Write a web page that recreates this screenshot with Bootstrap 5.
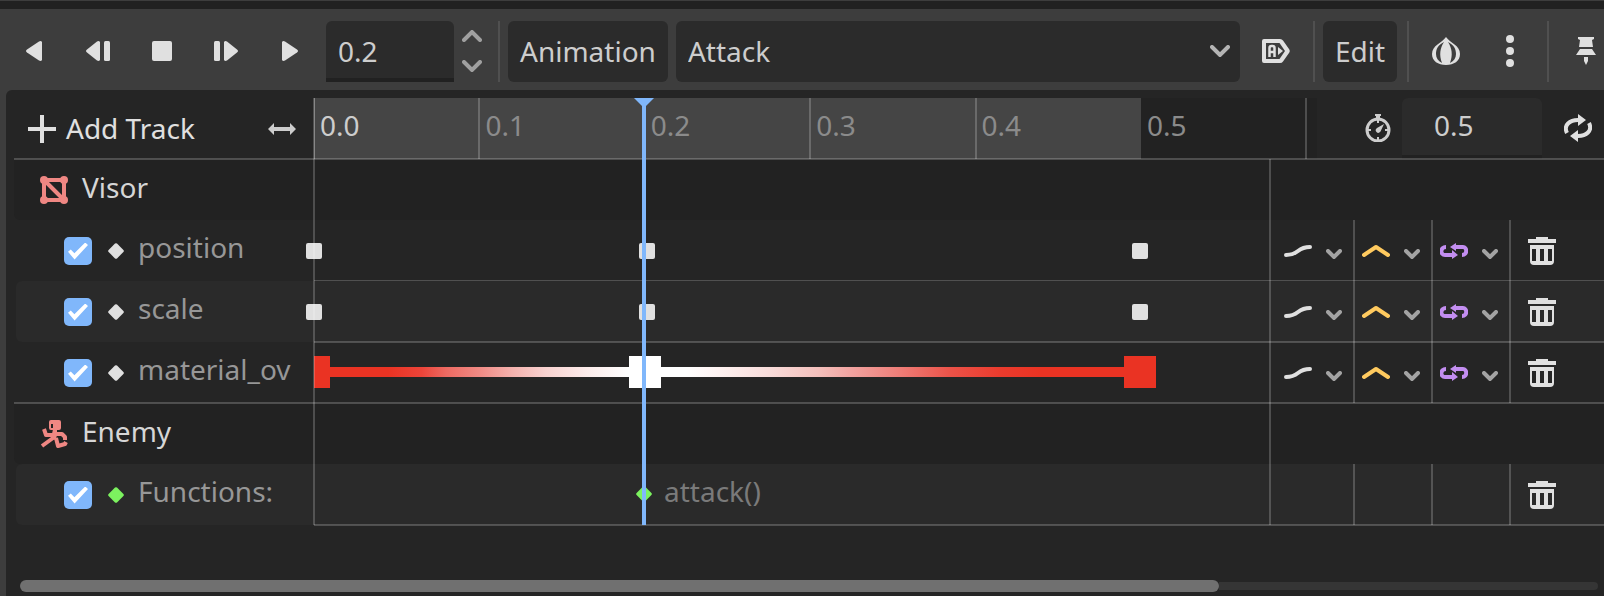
<!DOCTYPE html>
<html lang="en" data-bs-theme="dark">
<head>
<meta charset="utf-8">
<meta name="viewport" content="width=device-width, initial-scale=1">
<title>Animation</title>
<link href="https://cdn.jsdelivr.net/npm/bootstrap@5.3.0/dist/css/bootstrap.min.css" rel="stylesheet">
<style>
:root { --line: rgba(255,255,255,.2); --ink: #e0e0e0; --second: 1654px; --now: .1993; }
body { font: 28px/38px "Noto Sans", sans-serif; color: #cdcdcd; background: #3d3d3d; overflow: hidden; }
svg { display: block; fill: currentColor; flex: none; }
button { color: var(--ink); background: none; border: 0; padding: 0; }
.topstrip { height: 9px; background: #212121; border-top: 1px solid #3d3d3d; }
.toolbar { height: 81px; padding: 12px 0 8px 2px; }
.tool { width: 64px; height: 61px; padding-bottom: 2px; display: flex; align-items: center; justify-content: center; flex: none; }
.tool.auto { width: 56px; margin-right: 9px; }
.tool.pin { margin-right: -14px; }
.field { background: #2b2b2b; color: #cdcdcd; border: 0; border-bottom: 4px solid #212121; height: 61px; border-radius: 6px 6px 0 0; min-width: 0; outline: 0; padding: 2px 12px 0; }
.time-field { width: 128px; }
.spin { width: 36px; height: 61px; color: #a0a0a0; }
.spin button { color: inherit; height: 30px; width: 100%; display: grid; place-items: center; }
.rule-v { width: 2px; background: #505050; flex: none; }
.gap-r { margin-right: 5px; }
.gap-l { margin-left: 5px; }
.after-edit { margin-left: 10px; }
.solid { background: #2b2b2b; color: #cdcdcd; border-radius: 6px; height: 61px; padding: 0 12px 2px; flex: none; }
.pick { position: relative; min-width: 0; margin: 0 8px; }
.pick select { appearance: none; width: 100%; border: 0; height: 61px; background: #2b2b2b; color: #cdcdcd; border-radius: 6px; padding: 0 12px 2px; outline: 0; }
.pick svg { position: absolute; right: 10px; top: 24px; color: #b4b4b4; pointer-events: none; }
.panel { margin-left: 6px; background: #252525; border-top-left-radius: 6px; padding: 8px 0 0 8px; min-height: 506px; }
.names { width: 300px; flex: none; }
.head { height: 61px; }
.head .names { padding: 0 18px 0 14px; }
.addbtn { gap: 10px; }
.addbtn span { margin-bottom: 2px; }
.ruler { position: relative; flex: 1 1 0; min-width: 0; background: #222; overflow: hidden; }
.used { position: absolute; left: 0; top: 0; bottom: 0; width: calc(.5 * var(--second)); background: #454545; }
.tick { position: absolute; top: 0; bottom: 0; left: calc(var(--t) * var(--second) - 1px); border-left: 2px solid var(--line); padding: 8px 0 0 5px; color: #8b8b8b; }
.tick.now { color: #cdcdcd; }
.tick.plain { border-color: transparent; }
.length { width: 287px; flex: none; padding-left: 48px; }
.length svg { margin-bottom: 2px; }
.length-field { width: 140px; padding: 0 32px 4px; margin: 0 22px 0 11px; }
.tracks { position: relative; }
.band { height: 61px; position: relative; display: flex; }
.band.alt::before { content: ""; position: absolute; inset: 0 0 0 2px; background: #2a2a2a; border-radius: 6px 0 0 6px; }
.band.group { background: #222; border-radius: 0 0 0 6px; }
.band > * { position: relative; }
.band.lined::after { content: ""; position: absolute; left: 300px; right: 0; bottom: -1px; height: 2px; background: var(--line); }
.head-line { position: relative; }
.head-line::after { content: ""; position: absolute; left: 0; right: 0; bottom: -1px; height: 2px; background: var(--line); z-index: 1; }
.group .names { padding-left: 26px; display: flex; align-items: center; gap: 14px; color: #d6d6d6; }
.group .names svg { color: #ef8783; }
.track .names { padding-left: 50px; display: flex; align-items: center; color: #979797; overflow: hidden; }
.track .names label { margin-bottom: 8px; }
.group .names span { margin-bottom: 6px; }
.tickbox { appearance: none; width: 28px; height: 28px; border-radius: 5px; background: #80b7fb; margin: 1px 16px 0 0; display: grid; place-items: center; flex: none; }
.tickbox:checked::before { content: ""; width: 20px; height: 17px; background: #fff; clip-path: polygon(0 55%,14% 41%,32% 63%,86% 0,100% 14%,33% 100%); }
.kind { color: var(--ink); margin: 1px 14px 0 0; }
.kind.fn { color: #7cf25f; }
.lane { flex: 1 1 0; min-width: 0; }
.lane i, .mark-fn { position: absolute; }
.key { width: 16px; height: 16px; border-radius: 2px; background: var(--ink); top: 23px; left: calc(var(--t) * var(--second) - 8px); }
.swatch { width: 32px; height: 32px; top: 14px; left: calc(var(--t) * var(--second) - 16px); }
.swatch.first { width: 16px; left: 0; }
.ramp { top: 25px; height: 10px; left: 0; width: calc(.5 * var(--second)); background: linear-gradient(90deg,#ea3323 0,#ea3323 9%,#ec4439 13%,#ed6a62 16%,#f08a84 20%,#f4b2ae 24%,#f8d2d0 28%,#fceceb 33%,#fff 38%,#fff 45%,#fef2f1 49%,#f8dcda 55%,#f4c0bc 61%,#f1a3a0 65%,#ee7c76 71%,#eb5248 77%,#ea3b2d 83%,#ea3323 88%,#ea3323 100%); }
.mark-fn { left: calc(var(--now) * var(--second) - 8px); top: 22px; color: #7cf25f; }
.call { padding: 8px 0 0 350px; color: #7a7a7a; }
.opt { width: 78px; flex: none; border-left: 2px solid var(--line); display: flex; align-items: center; justify-content: space-between; padding: 0 11px 0 7px; height: 61px; color: #a3a3a3; }
.opt.wide { width: 84px; padding-left: 13px; border-color: transparent; }
.opt.del { width: 95px; padding-left: 17px; color: var(--ink); }
.dn { margin-top: 6px; }
.edge { position: absolute; width: 2px; background: var(--line); bottom: 0; pointer-events: none; }
.edge.start { left: 299px; top: -61px; }
.edge.end { right: 333px; top: 0; }
.playhead { position: absolute; left: calc(300px + var(--now) * var(--second) - 2px); width: 4px; top: -61px; bottom: 0; background: #80b7fb; z-index: 3; }
.playhead::before { content: ""; position: absolute; left: -8px; top: 0; border: 10px solid transparent; border-top-color: #80b7fb; border-bottom: 0; }
.scroller { margin: 55px 6px 0 6px; height: 12px; display: flex; align-items: center; }
.scroller .bar { height: 12px; width: 76%; border-radius: 6px; background: #707070; }
.scroller .rest { height: 8px; flex: 1; background: #353535; border-radius: 0 4px 4px 0; }
.hidden-defs { position: absolute; }
</style>
</head>
<body>
<svg class="hidden-defs" width="0" height="0" aria-hidden="true">
<defs>
<symbol id="trash" viewBox="0 0 28 28"><path d="M8 0h12v2h8v4H0V2h8zM2 8h24v16q0 4-4 4H6q-4 0-4-4zm2 4v12h4V12zm8 0v12h4V12zm8 0v12h4V12z" fill-rule="evenodd"/></symbol>
<symbol id="small-down" viewBox="0 0 16 10"><path d="M2 2l6 6 6-6" fill="none" stroke="currentColor" stroke-width="4" stroke-linecap="round"/></symbol>
<symbol id="curve" viewBox="0 0 28 14"><path d="M2 11C16 11 12 3 26 3" fill="none" stroke="#e0e0e0" stroke-width="4" stroke-linecap="round"/></symbol>
<symbol id="peak" viewBox="0 0 28 14"><path d="M2 11l12-8 12 8" fill="none" stroke="#ffca5f" stroke-width="4" stroke-linecap="round" stroke-linejoin="round"/></symbol>
<symbol id="wrap" viewBox="0 0 28 16"><path d="M6 4C0 4 0 12 5 12h8M22 12c6 0 5-8 1-8h-7" fill="none" stroke="#c38ef1" stroke-width="4"/><path d="M12 7l6 5-6 4zM16 0v8l-6-4z" fill="#c38ef1"/></symbol>
<symbol id="diamond" viewBox="0 0 16 16"><path d="M7 .6q1-.9 2 0L15.4 7q.9 1 0 2L9 15.400q-1 .9-2 0L.6 9q-.9-1 0-2z"/></symbol>
</defs>
</svg>
<div class="topstrip"></div>
<header class="toolbar d-flex">
<button class="tool" aria-label="Play backwards"><svg width="16" height="20" viewBox="0 0 16 20"><path d="M16 1v18q-1 1.500-3 .5L1 11.500q-2-1.500 0-3L13 .5q2-1 3 .5z"/></svg></button>
<button class="tool" aria-label="Play backwards from end"><svg width="24" height="20" viewBox="0 0 24 20"><path d="M14 1v18q-1 1.500-3 .5L1 11.500q-2-1.500 0-3L11 .5q2-1 3 .5z"/><rect x="18" width="6" height="20" rx="1.500"/></svg></button>
<button class="tool" aria-label="Stop"><svg width="20" height="20"><rect width="20" height="20" rx="2"/></svg></button>
<button class="tool" aria-label="Play from start"><svg width="24" height="20" viewBox="0 0 24 20"><path d="M10 1v18q1 1.500 3 .5l10-8q2-1.500 0-3L13 .5q-2-1-3 .5z"/><rect width="6" height="20" rx="1.500"/></svg></button>
<button class="tool" aria-label="Play"><svg width="16" height="20" viewBox="0 0 16 20"><path d="M0 1v18q1 1.500 3 .5l12-8q2-1.500 0-3L3 .5q-2-1-3 .5z"/></svg></button>
<input class="field time-field ms-1" value="0.2" aria-label="Current time">
<div class="spin flex-shrink-0"><button aria-label="Increase"><svg width="20" height="12" viewBox="0 0 20 12"><path d="M2 10l8-8 8 8" fill="none" stroke="currentColor" stroke-width="4" stroke-linecap="round"/></svg></button><button aria-label="Decrease"><svg width="20" height="12" viewBox="0 0 20 12"><path d="M2 2l8 8 8-8" fill="none" stroke="currentColor" stroke-width="4" stroke-linecap="round"/></svg></button></div>
<div class="rule-v ms-2 me-2"></div>
<button class="solid">Animation</button>
<div class="pick flex-grow-1"><select aria-label="Animation name"><option>Attack</option></select><svg width="20" height="12" viewBox="0 0 20 12"><path d="M2 2l8 8 8-8" fill="none" stroke="currentColor" stroke-width="4" stroke-linecap="round"/></svg></div>
<button class="tool auto" aria-label="Autoplay on load"><svg width="28" height="24" viewBox="0 0 28 24"><path fill-rule="evenodd" d="M2 0h16q2 0 3 1.500l6 8.500q1.500 2 0 4l-6 8.500Q20 24 18 24H2q-2 0-2-2V2Q0 0 2 0zm2 4v16h13.500L23 12 17.500 4z"/><path d="M7.500 18V9q0-2 2-2h1q2 0 2 2v9M7.500 13h5" fill="none" stroke="currentColor" stroke-width="2.500"/><path d="M16 8l5 4-5 4z"/></svg></button>
<div class="rule-v me-2"></div>
<button class="solid">Edit</button>
<div class="rule-v after-edit gap-r"></div>
<button class="tool" aria-label="Onion skinning"><svg width="28" height="28" viewBox="0 0 28 28"><path fill-rule="evenodd" d="M14 0C18 6 28 8 28 17 28 24 22 28 14 28S0 24 0 17C0 8 10 6 14 0zM12 5C6 8 4 12 4 17 4 21 6 24 10 26 7 18 8 11 12 5zM16 5C20 11 21 18 18 26 22 24 24 21 24 17 24 12 22 8 16 5z"/></svg></button>
<button class="tool" aria-label="More options"><svg width="8" height="32"><circle cx="4" cy="4" r="4"/><circle cx="4" cy="16" r="4"/><circle cx="4" cy="28" r="4"/></svg></button>
<div class="rule-v gap-l gap-r"></div>
<button class="tool pin" aria-label="Pin"><svg width="20" height="28" viewBox="0 0 20 28"><path d="M2 0h16v2l-2 1 1 7H3l1-7-2-1zM4 12h12l4 6H0zM8 20h4v4l-2 4-2-4z"/></svg></button>
</header>
<main class="panel">
<div class="head head-line d-flex">
<div class="names d-flex align-items-center justify-content-between">
<button class="d-flex align-items-center addbtn"><svg width="28" height="28"><path d="M12 0h4v12h12v4H16v12h-4V16H0v-4h12z"/></svg><span>Add Track</span></button>
<svg width="28" height="12" viewBox="0 0 28 12"><path d="M6 0v4h16V0l6 6-6 6V8H6v4L0 6z"/></svg>
</div>
<div class="ruler"><div class="used"></div>
<span class="tick now" style="--t:0">0.0</span><span class="tick" style="--t:.1">0.1</span><span class="tick plain" style="--t:.2">0.2</span><span class="tick" style="--t:.3">0.3</span><span class="tick" style="--t:.4">0.4</span><span class="tick plain" style="--t:.5">0.5</span><span class="tick" style="--t:.6"></span></div>
<div class="length d-flex align-items-center">
<label for="len" aria-label="Animation length"><svg width="26" height="28" viewBox="0 0 26 28"><path d="M10 0h6v2h-1v3h-4V2h-1z"/><circle cx="13" cy="16" r="11" fill="none" stroke="currentColor" stroke-width="3"/><path d="M13 5v4M13 23v4M2 16h4M20 16h4" stroke="currentColor" stroke-width="2"/><path d="M19 10l-3.500 7.500q-2 2.500-4 .5t.5-4z"/></svg></label>
<input id="len" class="field length-field" value="0.5">
<button aria-label="Loop"><svg width="28" height="28" viewBox="0 0 28 28"><path d="M3 19C-1 11 6 6 14 6M25 9c4 8-3 13-11 13" fill="none" stroke="currentColor" stroke-width="4"/><path d="M14 0l8 6-8 6zM14 16v12l-8-6z"/></svg></button>
</div>
</div>
<div class="tracks">
<div class="band group"><div class="names"><svg width="28" height="28" viewBox="0 0 28 28"><path d="M4 4h20v20H4zL24 24" fill="none" stroke="currentColor" stroke-width="4"/><circle cx="4" cy="4" r="4"/><circle cx="24" cy="4" r="4"/><circle cx="4" cy="24" r="4"/><circle cx="24" cy="24" r="4"/></svg><span>Visor</span></div></div>
<div class="band track lined"><div class="names"><input class="tickbox" type="checkbox" id="t1" checked><svg class="kind" width="16" height="16"><use href="#diamond"/></svg><label for="t1">position</label></div>
<div class="lane"><i class="key" style="--t:0"></i><i class="key" style="--t:.2013"></i><i class="key" style="--t:.4994"></i></div>
<button class="opt wide" aria-label="Update mode"><svg width="28" height="14"><use href="#curve"/></svg><svg class="dn" width="16" height="10"><use href="#small-down"/></svg></button><button class="opt" aria-label="Interpolation mode"><svg width="28" height="14"><use href="#peak"/></svg><svg class="dn" width="16" height="10"><use href="#small-down"/></svg></button><button class="opt" aria-label="Loop wrap mode"><svg width="28" height="16"><use href="#wrap"/></svg><svg class="dn" width="16" height="10"><use href="#small-down"/></svg></button><button class="opt del" aria-label="Remove track"><svg width="28" height="28"><use href="#trash"/></svg></button></div>
<div class="band track lined alt"><div class="names"><input class="tickbox" type="checkbox" id="t2" checked><svg class="kind" width="16" height="16"><use href="#diamond"/></svg><label for="t2">scale</label></div>
<div class="lane"><i class="key" style="--t:0"></i><i class="key" style="--t:.2013"></i><i class="key" style="--t:.4994"></i></div>
<button class="opt wide" aria-label="Update mode"><svg width="28" height="14"><use href="#curve"/></svg><svg class="dn" width="16" height="10"><use href="#small-down"/></svg></button><button class="opt" aria-label="Interpolation mode"><svg width="28" height="14"><use href="#peak"/></svg><svg class="dn" width="16" height="10"><use href="#small-down"/></svg></button><button class="opt" aria-label="Loop wrap mode"><svg width="28" height="16"><use href="#wrap"/></svg><svg class="dn" width="16" height="10"><use href="#small-down"/></svg></button><button class="opt del" aria-label="Remove track"><svg width="28" height="28"><use href="#trash"/></svg></button></div>
<div class="band track head-line"><div class="names"><input class="tickbox" type="checkbox" id="t3" checked><svg class="kind" width="16" height="16"><use href="#diamond"/></svg><label for="t3">material_ov</label></div>
<div class="lane"><i class="ramp"></i><i class="swatch first" style="background:#ea3323"></i><i class="swatch" style="--t:.2;background:#fff"></i><i class="swatch" style="--t:.4994;background:#ea3323"></i></div>
<button class="opt wide" aria-label="Update mode"><svg width="28" height="14"><use href="#curve"/></svg><svg class="dn" width="16" height="10"><use href="#small-down"/></svg></button><button class="opt" aria-label="Interpolation mode"><svg width="28" height="14"><use href="#peak"/></svg><svg class="dn" width="16" height="10"><use href="#small-down"/></svg></button><button class="opt" aria-label="Loop wrap mode"><svg width="28" height="16"><use href="#wrap"/></svg><svg class="dn" width="16" height="10"><use href="#small-down"/></svg></button><button class="opt del" aria-label="Remove track"><svg width="28" height="28"><use href="#trash"/></svg></button></div>
<div class="band group"><div class="names"><svg width="28" height="28" viewBox="0 0 28 28"><path fill-rule="evenodd" d="M11 0h8q2 0 2 2v6q0 2-2 2h-8q-2 0-2-2V2q0-2 2-2zm0 4v4h2V4z"/><path d="M13 9h4v5l-1 6-5-1 1-5z"/><path d="M4 9l2 6h7M15 14h7l3 3v3M13 18l-11 8M16 18l2 8 7-2 1-2" fill="none" stroke="currentColor" stroke-width="4" stroke-linejoin="round"/></svg><span>Enemy</span></div></div>
<div class="band track lined alt"><div class="names"><input class="tickbox" type="checkbox" id="t4" checked><svg class="kind fn" width="16" height="16"><use href="#diamond"/></svg><label for="t4">Functions:</label></div>
<div class="lane"><svg class="mark-fn" width="16" height="16"><use href="#diamond"/></svg><div class="call">attack()</div></div>
<div class="opt wide"></div><div class="opt"></div><div class="opt"></div><button class="opt del" aria-label="Remove track"><svg width="28" height="28"><use href="#trash"/></svg></button></div>
<div class="edge start"></div><div class="edge end"></div><div class="playhead"></div>
</div>
<div class="scroller"><div class="bar"></div><div class="rest"></div></div>
</main>
<script src="https://cdn.jsdelivr.net/npm/bootstrap@5.3.0/dist/js/bootstrap.bundle.min.js"></script>
</body>
</html>
